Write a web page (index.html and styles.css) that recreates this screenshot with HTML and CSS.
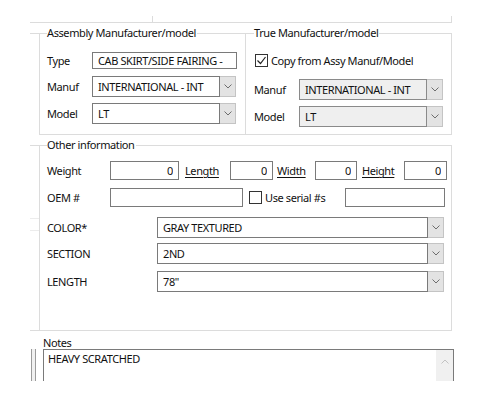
FILE: index.html
```html
<!DOCTYPE html>
<html lang="en">
  <head>
    <meta charset="UTF-8" />
    <title>Part details</title>
    <link rel="stylesheet" href="styles.css">
  </head>
  <body>
    <div class="screen">
      <div class="top-strip"><div class="top-cell"></div></div>

      <div class="row groups-row">
        <div class="stub-col"><div class="stub"></div></div>

        <div class="group group-assy">
          <div class="group-title">Assembly Manufacturer/model</div>
          <div class="field field-type">
            <label class="label" for="type">Type</label>
            <input class="textbox type-box" id="type" type="text" value="CAB SKIRT/SIDE FAIRING -" readonly />
          </div>
          <div class="field field-manuf">
            <label class="label">Manuf</label>
            <div class="combo assy-combo">
              <span class="combo-text">INTERNATIONAL - INT</span>
              <span class="combo-btn"><svg width="8" height="5" viewBox="0 0 8 5"><polyline points="0.5,0.5 4,4 7.5,0.5" /></svg></span>
            </div>
          </div>
          <div class="field field-model">
            <label class="label">Model</label>
            <div class="combo assy-combo">
              <span class="combo-text">LT</span>
              <span class="combo-btn"><svg width="8" height="5" viewBox="0 0 8 5"><polyline points="0.5,0.5 4,4 7.5,0.5" /></svg></span>
            </div>
          </div>
        </div>

        <div class="group group-true">
          <div class="group-title">True Manufacturer/model</div>
          <div class="field field-copy">
            <span class="check checked"><svg width="11" height="11" viewBox="0 0 11 11"><polyline points="1.5,5.5 4.5,8.5 9.5,2" /></svg></span>
            <span class="check-label">Copy from Assy Manuf/Model</span>
          </div>
          <div class="field field-tmanuf">
            <label class="label">Manuf</label>
            <div class="combo true-combo disabled">
              <span class="combo-text">INTERNATIONAL - INT</span>
              <span class="combo-btn"><svg width="8" height="5" viewBox="0 0 8 5"><polyline points="0.5,0.5 4,4 7.5,0.5" /></svg></span>
            </div>
          </div>
          <div class="field field-model">
            <label class="label">Model</label>
            <div class="combo true-combo disabled">
              <span class="combo-text">LT</span>
              <span class="combo-btn"><svg width="8" height="5" viewBox="0 0 8 5"><polyline points="0.5,0.5 4,4 7.5,0.5" /></svg></span>
            </div>
          </div>
        </div>
      </div>

      <div class="row other-row">
        <div class="stub-col other-stubs">
          <div class="stub"></div>
          <div class="stub faint stub-a"></div>
          <div class="stub faint stub-b"></div>
          <div class="stub stub-end"></div>
        </div>

        <div class="group group-other">
          <div class="group-title">Other information</div>
          <div class="field field-weight">
            <label class="label wide">Weight</label>
            <input class="textbox num weight-box" type="text" value="0" readonly />
            <span class="link link-length">Length</span>
            <input class="textbox num small-box" type="text" value="0" readonly />
            <span class="link link-width">Width</span>
            <input class="textbox num width-box" type="text" value="0" readonly />
            <span class="link link-height">Height</span>
            <input class="textbox num small-box" type="text" value="0" readonly />
          </div>
          <div class="field field-oem">
            <label class="label wide">OEM #</label>
            <input class="textbox oem-box" type="text" value="" readonly />
            <span class="check serial-check"></span>
            <span class="check-label serial-label">Use serial #s</span>
            <input class="textbox serial-box" type="text" value="" readonly />
          </div>
          <div class="field field-color">
            <label class="label attr">COLOR*</label>
            <div class="combo attr-combo">
              <span class="combo-text">GRAY TEXTURED</span>
              <span class="combo-btn"><svg width="8" height="5" viewBox="0 0 8 5"><polyline points="0.5,0.5 4,4 7.5,0.5" /></svg></span>
            </div>
          </div>
          <div class="field field-section">
            <label class="label attr">SECTION</label>
            <div class="combo attr-combo">
              <span class="combo-text">2ND</span>
              <span class="combo-btn"><svg width="8" height="5" viewBox="0 0 8 5"><polyline points="0.5,0.5 4,4 7.5,0.5" /></svg></span>
            </div>
          </div>
          <div class="field field-length">
            <label class="label attr">LENGTH</label>
            <div class="combo attr-combo">
              <span class="combo-text">78"</span>
              <span class="combo-btn"><svg width="8" height="5" viewBox="0 0 8 5"><polyline points="0.5,0.5 4,4 7.5,0.5" /></svg></span>
            </div>
          </div>
        </div>
      </div>

      <div class="row notes-row">
        <div class="side-bar"></div>
        <div class="notes-col">
          <div class="notes-label">Notes</div>
          <div class="notes-box">
            <div class="notes-text">HEAVY SCRATCHED</div>
            <div class="scrollbar">
              <svg width="8" height="5" viewBox="0 0 8 5"><polyline points="0.5,4.5 4,1 7.5,4.5" /></svg>
            </div>
          </div>
        </div>
      </div>
    </div>
  </body>
</html>
```

FILE: styles.css
```css
body {
  margin: 0;
  background: #fff;
  font-family: "Noto Sans", "Open Sans", sans-serif;
  font-size: 11px;
  letter-spacing: -0.4px;
  color: #111;
}

.screen {
  width: 500px;
  height: 381px;
  overflow: hidden;
}

/* bottom edge of the panel above */
.top-strip {
  margin: 16px 0 0 30px;
  width: 421px;
  height: 6px;
  border-right: 1px solid #dcdcdc;
  border-bottom: 1px solid #dcdcdc;
}

.top-cell {
  width: 122px;
  height: 6px;
  border-right: 1px solid #dcdcdc;
}

.row {
  display: flex;
}

.groups-row {
  margin-top: 10px;
}

.stub-col {
  width: 9px;
  margin-left: 30px;
  display: flex;
  flex-direction: column;
}

.stub {
  height: 1px;
  background: #dcdcdc;
}

.stub.faint {
  background: #ececec;
}

.stub-a {
  margin-top: 72px;
}

.stub-b {
  margin-top: 11px;
}

.stub-end {
  margin-top: auto;
}

/* group boxes */
.group {
  border: 1px solid #dcdcdc;
  display: flex;
  flex-direction: column;
  align-items: flex-start;
}

.group-assy {
  width: 198px;
  height: 100px;
  padding-left: 7px;
}

.group-true {
  width: 197px;
  height: 100px;
  padding-left: 8px;
  border-left: none;
}

.group-title {
  margin-top: -8px;
  padding: 0 1px 0 0;
  height: 14px;
  line-height: 14px;
  background: #fff;
}

.field {
  display: flex;
  align-items: center;
}

.label {
  width: 45px;
  flex: none;
}

.label.wide {
  width: 63px;
}

.label.attr {
  width: 110px;
}

.textbox {
  box-sizing: border-box;
  height: 19px;
  margin: 0;
  padding: 0 5px;
  border: 1px solid #7a7a7a;
  border-radius: 0;
  font: inherit;
  letter-spacing: inherit;
  color: #111;
  background: #fff;
  outline: none;
}

.textbox.num {
  text-align: right;
  padding-right: 5px;
}

.field-type {
  margin-top: 12px;
}

.type-box {
  width: 145px;
  height: 17px;
}

.field-manuf {
  margin-top: 7px;
}

.field-model {
  margin-top: 6px;
}

/* combo boxes */
.combo {
  display: flex;
  height: 21px;
  box-sizing: border-box;
}

.combo-text {
  flex: 1;
  box-sizing: border-box;
  border: 1px solid #7a7a7a;
  padding-left: 5px;
  line-height: 19px;
  background: #fff;
  white-space: nowrap;
  overflow: hidden;
}

.combo-btn {
  width: 16px;
  box-sizing: border-box;
  border: 1px solid #c4c4c4;
  border-left: none;
  background: #e3e3e3;
  display: flex;
  align-items: center;
  justify-content: center;
}

.combo-btn svg polyline,
.scrollbar svg polyline {
  fill: none;
  stroke: #6d6d6d;
  stroke-width: 1;
}

.combo.disabled .combo-text {
  background: #efefef;
  border-color: #8a8a8a;
}

.assy-combo {
  width: 144px;
}

.true-combo {
  width: 144px;
}

/* checkboxes */
.check {
  width: 13px;
  height: 13px;
  box-sizing: border-box;
  border: 1px solid #333;
  background: #fff;
  display: flex;
  align-items: center;
  justify-content: center;
  flex: none;
}

.check svg polyline {
  fill: none;
  stroke: #222;
  stroke-width: 1.2;
}

.field-copy {
  margin-top: 13px;
  padding-left: 1px;
}

.check-label {
  margin-left: 3px;
}

.field-tmanuf {
  margin-top: 11px;
}

/* other information */
.other-row {
  margin-top: 10px;
}

.other-stubs {
  height: 186px;
}

.group-other {
  width: 404px;
  height: 184px;
  padding-left: 7px;
}

.field-weight {
  margin-top: 9px;
}

.weight-box {
  width: 69px;
}

.link {
  text-decoration: underline;
  text-underline-offset: 2px;
  flex: none;
}

.link-length {
  width: 45px;
  margin-left: 6px;
}

.link-width {
  width: 38px;
  margin-left: 4px;
}

.link-height {
  width: 42px;
  margin-left: 5px;
}

.small-box {
  width: 43px;
}

.width-box {
  width: 42px;
}

.field-oem {
  margin-top: 8px;
}

.oem-box {
  width: 133px;
}

.serial-check {
  margin-left: 6px;
}

.serial-label {
  width: 80px;
}

.serial-box {
  width: 100px;
}

.field-color {
  margin-top: 10px;
}

.field-section {
  margin-top: 5px;
}

.field-length {
  margin-top: 7px;
}

.attr-combo {
  width: 287px;
}

/* notes */
.side-bar {
  width: 3px;
  height: 60px;
  margin: 18px 0 0 31px;
  border-left: 1px solid #9a9a9a;
  border-right: 1px solid #9a9a9a;
  background: #f0f0f0;
}

.notes-col {
  margin-left: 7px;
}

.notes-label {
  margin-top: 5px;
  height: 13px;
  line-height: 13px;
}

.notes-box {
  width: 411px;
  height: 60px;
  box-sizing: border-box;
  border: 1px solid #7a7a7a;
  display: flex;
}

.notes-text {
  flex: 1;
  padding: 2px 0 0 4px;
  line-height: 14px;
}

.scrollbar {
  width: 17px;
  background: #f0f0f0;
  display: flex;
  justify-content: center;
  padding-top: 9px;
  box-sizing: border-box;
}

.scrollbar svg polyline {
  stroke: #c2c2c2;
}
```
